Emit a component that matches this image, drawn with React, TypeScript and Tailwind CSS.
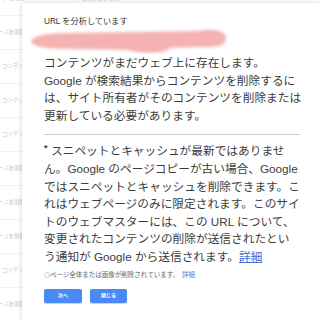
import React from 'react';

const rows = [
  'ページを削除',
  'ページを削除',
  'コンテンツ',
  'コンテンツ',
  'コンテンツ',
  'ページを削除',
  'ページを削除',
  'ページを削除',
  'コンテンツ',
  'ページを削除',
];

function Redaction() {
  return (
    <svg width="210" height="27" viewBox="0 0 210 27" className="block -ml-[14px]">
      <defs>
        <filter id="soft" x="-10%" y="-50%" width="120%" height="200%">
          <feGaussianBlur stdDeviation="1.7" />
        </filter>
      </defs>
      <path
        d="M1 14 C4 8 20 6 40 6 L168 4 C182 1 196 3 196 11 C196 19 186 21 172 20 L140 21 C136 27 108 27 98 23 L40 22 C18 22 2 20 1 14 Z"
        fill="#f5b2b2"
        filter="url(#soft)"
      />
    </svg>
  );
}

export default function App() {
  return (
    <div className="relative w-[320px] h-[320px] overflow-hidden bg-white font-['Liberation_Sans','Noto_Sans_CJK_JP',sans-serif]">
      {/* list behind the dialog */}
      <div className="flex flex-col -mt-[18px]">
        {rows.map((label, i) => (
          <div
            key={i}
            className="h-[34px] shrink-0 flex items-center border-b border-[#f0f0f0] text-[5.5px] text-[#c4c4c4] whitespace-nowrap"
          >
            <span className={label.startsWith('ペ') ? '-ml-[8px]' : 'ml-[2px]'}>{label}</span>
            <span className="ml-[40px]">{i === 0 ? 'ページを削除しました' : ''}</span>
          </div>
        ))}
      </div>

      {/* dialog */}
      <div className="absolute left-[22px] top-[3px] right-0 bottom-0 bg-white shadow-[0_0_5px_rgba(0,0,0,0.18)] pl-[22px] pt-[14px] text-[#3c3c3c]">
        <div className="text-[8.2px] leading-[10px] text-[#333]">URL を分析しています</div>

        <Redaction />

        <p className="text-[11.7px] leading-[17.6px] whitespace-nowrap">
          コンテンツがまだウェブ上に存在します。<br />
          Google が検索結果からコンテンツを削除するに<br />
          は、サイト所有者がそのコンテンツを削除または<br />
          更新している必要があります。
        </p>

        <div className="mt-[9.5px] mr-[20px] h-px bg-[#cfcfcf]" />

        <p className="mt-[7.5px] text-[11.7px] leading-[17.6px] whitespace-nowrap">
          <span className="relative -top-[4px] inline-block w-[7px] text-[9px] leading-none font-bold">*</span>
          スニペットとキャッシュが最新ではありませ<br />
          ん。Google のページコピーが古い場合、Google<br />
          ではスニペットとキャッシュを削除できます。こ<br />
          れはウェブページのみに限定されます。このサイ<br />
          トのウェブマスターには、この URL について、<br />
          変更されたコンテンツの削除が送信されたとい<br />
          う通知が Google から送信されます。
          <a className="text-[#3b6fd4] underline">詳細</a>
        </p>

        <div className="mt-[4.5px] flex items-center h-[10px] text-[6.5px] text-[#666] whitespace-nowrap">
          <span className="w-[6px] h-[6px] rounded-full border border-[#cfcfcf] shrink-0" />
          <span>ページ全体または画像が削除されています。</span>
          <a className="ml-[3px] text-[#4a7fe0]">詳細</a>
        </div>

        <div className="mt-[9px] flex gap-[8px]">
          <button className="w-[38px] h-[14px] rounded-[2px] bg-[#4a8af4] text-white text-[5px] font-bold shadow-[0_1px_1px_rgba(0,0,0,0.2)] flex items-center justify-center">
            次へ
          </button>
          <button className="w-[37px] h-[14px] rounded-[2px] bg-[#4a8af4] text-white text-[5px] font-bold shadow-[0_1px_1px_rgba(0,0,0,0.2)] flex items-center justify-center">
            閉じる
          </button>
        </div>
      </div>
    </div>
  );
}
